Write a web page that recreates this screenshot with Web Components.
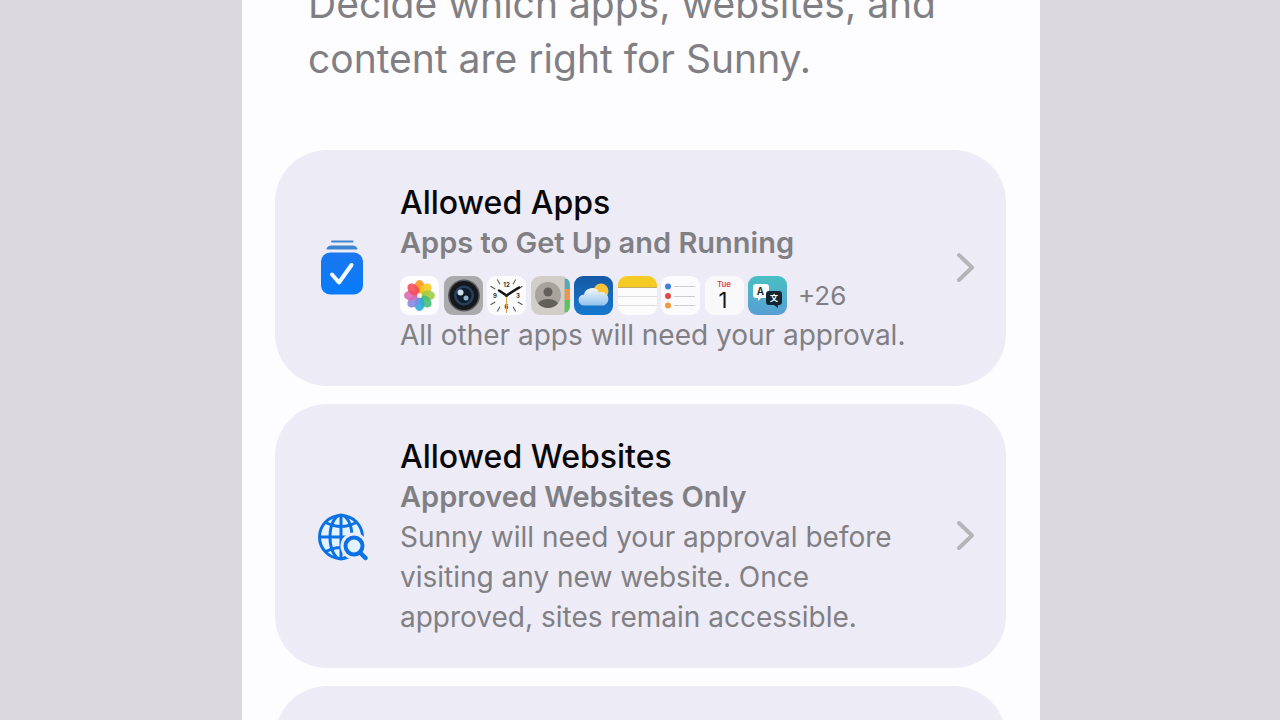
<!DOCTYPE html>
<html lang="en">
<head>
<meta charset="utf-8">
<meta name="viewport" content="width=device-width, initial-scale=1">
<title>Allowed Content</title>
<style>
  html, body { height: 100%; }
  body { margin: 0; overflow: hidden; background: #dbd9df; color: #807f84; font-family: Inter, "Liberation Sans", sans-serif; }
</style>
</head>
<body>
<setup-sheet>
  <span slot="intro">Decide which apps, websites, and content are right for Sunny.</span>
  <option-card>
    <glyph-icon slot="icon" name="apps"></glyph-icon>
    <span slot="title">Allowed Apps</span>
    <span slot="status">Apps to Get Up and Running</span>
    <app-strip slot="extra" more="+26"></app-strip>
    <span slot="detail">All other apps will need your approval.</span>
  </option-card>
  <option-card>
    <glyph-icon slot="icon" name="web"></glyph-icon>
    <span slot="title">Allowed Websites</span>
    <span slot="status">Approved Websites Only</span>
    <span slot="detail">Sunny will need your approval before visiting any new website. Once approved, sites remain accessible.</span>
  </option-card>
  <option-card blank></option-card>
</setup-sheet>

<script>
const define = (name, html, setup) => customElements.define(name, class extends HTMLElement {
  constructor() {
    super();
    this.attachShadow({ mode: "open" }).innerHTML = html;
  }
  connectedCallback() { if (setup) setup(this, this.shadowRoot); }
});

const glyphs = {
  apps: `<svg width="52" height="58" viewBox="0 0 52 58">
    <defs><linearGradient id="g" x1="0" y1="0" x2="0" y2="1"><stop offset="0" stop-color="#1a78ee"/><stop offset="1" stop-color="#087bfb"/></linearGradient></defs>
    <path d="M16 1.500h20.500M11.500 8.500q1.500-2 4-2h21q2.500 0 4 2z" fill="#3c86d0" stroke="#3c86d0" stroke-width="2" stroke-linecap="round" stroke-linejoin="round"/>
    <rect x="5" y="12.500" width="42" height="42" rx="9" fill="url(#g)"/>
    <path d="M16 34.500l7 8L35.500 25" fill="none" stroke="#f4fcff" stroke-width="4" stroke-linecap="round" stroke-linejoin="round"/></svg>`,
  web: `<svg width="52" height="52" viewBox="0 0 52 52" fill="none" stroke="#0c71e4" stroke-width="3">
    <defs><mask id="m"><rect width="52" height="52" fill="#fff" stroke="none"/><circle cx="38" cy="35" r="13.500" fill="#000" stroke="none"/></mask></defs>
    <g mask="url(#m)"><circle cx="25" cy="26" r="21.500" fill="#e2f2ff"/><ellipse cx="25" cy="26" rx="11" ry="22"/><path d="M25 4v44M3 26h44M9 11q16 9 32 0M9 41q16-9 32 0"/></g>
    <circle cx="38" cy="35" r="8.500" fill="#e2f2ff" stroke-width="4"/><path d="M44.500 42l5 5" stroke-width="4.500" stroke-linecap="round"/></svg>`
};

define("glyph-icon", "", (host, root) => {
  root.innerHTML = `<style>:host{display:block}svg{display:block}</style>${glyphs[host.getAttribute("name")]}`;
});

const petals = ["#ff9518", "#f4c91b", "#9bcb42", "#42bd76", "#28a8dc", "#8585df", "#dc68b2", "#f34b56"]
  .map((c, i) => `<ellipse cx="19.500" cy="11" rx="5" ry="7" fill="${c}" opacity=".88" transform="rotate(${i * 45} 19.500 19.500)"/>`).join("");
const ticks = Array.from({ length: 12 }, (_, i) => i % 3
  ? `<path d="M19.500 1v5.500" stroke="#555" transform="rotate(${i * 30} 19.500 19.500)"/>` : "").join("");

const apps = {
  Photos: `<rect width="39" height="39" rx="9" fill="#fdfcfe"/>${petals}<circle cx="19.500" cy="19.500" r="2.500" fill="#fff0df"/>`,
  Camera: `<rect width="39" height="39" rx="9" fill="#aaa9ac"/><circle cx="20" cy="19.500" r="16" fill="#5a595d"/><circle cx="20" cy="19.500" r="14.500" fill="#15181d"/><circle cx="20" cy="19.500" r="10" fill="#28405b"/><circle cx="20" cy="19.500" r="7.500" fill="#101b2c"/><circle cx="16.500" cy="16.500" r="3" fill="#cddfea"/><circle cx="22" cy="22" r="2.500" fill="#8fb2cf"/>`,
  Clock: `<rect width="39" height="39" rx="9" fill="#fcfbfc"/>${ticks}<g font-family="Inter, sans-serif" font-size="6" font-weight="700" fill="#333" text-anchor="middle"><text x="19.500" y="11">12</text><text x="31" y="22">3</text><text x="19.500" y="33">6</text><text x="8" y="22">9</text></g><path d="M12 14.500l7.500 5L32 11.500" fill="none" stroke="#111" stroke-width="2.500" stroke-linecap="round"/><path d="M19.500 19.500V37" stroke="#dda24b"/><circle cx="19.500" cy="19.500" r="1.500" fill="#222"/>`,
  Contacts: `<defs><clipPath id="k"><rect width="39" height="39" rx="9"/></clipPath><clipPath id="p"><circle cx="17" cy="19" r="13"/></clipPath></defs><g clip-path="url(#k)"><rect width="39" height="39" fill="#d1cec7"/><path d="M34 3h5v10h-5z" fill="#51a9bd"/><path d="M34 13h5v11h-5z" fill="#f39345"/><path d="M34 24h5v12h-5z" fill="#55c955"/><path d="M33.500 2v35" stroke="#bbb8b0"/></g><circle cx="17" cy="19" r="13" fill="#a7a39c"/><g clip-path="url(#p)" fill="#625f5b"><circle cx="17" cy="16" r="4.500"/><ellipse cx="17" cy="30" rx="11" ry="7"/></g>`,
  Weather: `<defs><linearGradient id="w" x1="0" y1="0" x2="0" y2="1"><stop offset="0" stop-color="#1659a4"/><stop offset="1" stop-color="#1579cf"/></linearGradient><linearGradient id="c" x1="0" y1="0" x2="0" y2="1"><stop offset="0" stop-color="#f5f8fc"/><stop offset="1" stop-color="#91c2eb"/></linearGradient></defs><rect width="39" height="39" rx="9" fill="url(#w)"/><circle cx="27" cy="15" r="7.500" fill="#f9c43a"/><path d="M10 29.500a5.500 5.500 0 0 1 0-11 8 8 0 0 1 15-2 6.500 6.500 0 0 1 5 13z" fill="url(#c)"/>`,
  Notes: `<defs><clipPath id="n"><rect width="39" height="39" rx="9"/></clipPath></defs><g clip-path="url(#n)"><rect width="39" height="39" fill="#fdfcfd"/><rect width="39" height="11" fill="#f6ca25"/><path d="M0 11.500h39" stroke="#c5aa6a"/><path d="M0 20.500h39M0 29.500h39" stroke="#dedce1"/></g>`,
  Reminders: `<rect width="39" height="39" rx="9" fill="#fbfafc"/><path d="M13 10.500h21M13 20.500h21M13 29.500h21" stroke="#cccbd0"/><circle cx="7" cy="10.500" r="3" fill="#3e7fda"/><circle cx="7" cy="20" r="3" fill="#db4a47"/><circle cx="7" cy="29.500" r="3" fill="#f29b3c"/>`,
  Calendar: `<rect width="39" height="39" rx="9" fill="#f9f8fa"/><g font-family="Inter, sans-serif" text-anchor="middle"><text x="19" y="11" font-size="8" font-weight="500" fill="#df3346">Tue</text><text x="18" y="32" font-size="22" fill="#19191b">1</text></g>`,
  Translate: `<defs><linearGradient id="t" x1="0" y1="0" x2="0" y2="1"><stop offset="0" stop-color="#48bfc2"/><stop offset="1" stop-color="#579fd4"/></linearGradient></defs><rect width="39" height="39" rx="9" fill="url(#t)"/><path d="M8 8h10a3 3 0 0 1 3 3v8a3 3 0 0 1-3 3h-5l-3 3v-3H8a3 3 0 0 1-3-3v-8a3 3 0 0 1 3-3z" fill="#fafcfd"/><path d="M21 15h10a3 3 0 0 1 3 3v8a3 3 0 0 1-3 3h-1v3l-4-3h-5a3 3 0 0 1-3-3v-8a3 3 0 0 1 3-3z" fill="#122631"/><g font-weight="600" text-anchor="middle"><text x="12.500" y="19" font-family="Inter, sans-serif" font-size="10" fill="#142630">A</text><text x="26" y="25" font-family="Noto Sans CJK SC, sans-serif" font-size="8" fill="#fff">文</text></g>`
};

define("app-strip", "", (host, root) => {
  root.innerHTML = `<style>
    :host { display: flex; align-items: center; gap: 11px; padding-top: 13px; font-size: 26px; line-height: 39px; }
    .apps { display: flex; justify-content: space-between; width: 387px; }
    svg { display: block; flex: none; }
  </style><span class="apps">${Object.entries(apps).map(([n, art]) =>
    `<svg role="img" aria-label="${n}" width="39" height="39" viewBox="0 0 39 39">${art}</svg>`).join("")}</span><span>${host.getAttribute("more")}</span>`;
});

define("option-card", `<style>
  :host { display: block; }
  button { display: grid; grid-template-columns: 52px minmax(0, 1fr) 20px; column-gap: 32px; align-items: center;
    box-sizing: border-box; width: 100%; padding: 33px 31px 31px 41px; border: 0; border-radius: 52px;
    background: #edebf5; color: inherit; font: inherit; font-size: 28px; line-height: 40px; text-align: left; }
  :host([blank]) button { min-height: 264px; }
  :host([blank]) svg { visibility: hidden; }
  .text { display: grid; }
  .title { color: #08080a; font-size: 32px; font-weight: 500; }
  .status { font-size: 29px; font-weight: 600; }
  .detail { max-width: 520px; }
</style>
<button type="button">
  <slot name="icon"><span></span></slot>
  <span class="text">
    <slot name="title" class="title"></slot>
    <slot name="status" class="status"></slot>
    <slot name="extra"></slot>
    <span class="detail"><slot name="detail"></slot></span>
  </span>
  <svg width="20" height="34" viewBox="0 0 20 34" fill="none" stroke="#b5b4b9" stroke-width="4" stroke-linecap="round" stroke-linejoin="round" aria-hidden="true"><path d="M4 3l13 12.500L4 28"/></svg>
</button>`);

define("setup-sheet", `<style>
  :host { display: block; box-sizing: border-box; height: 100%; padding: 0 240px 0 242px; overflow: hidden; }
  main { box-sizing: border-box; min-height: 100%; padding: 0 34px 0 33px; background: #fdfcfe; }
  header { display: flex; align-items: flex-end; box-sizing: border-box; height: 150px; padding: 0 33px 64px; overflow: hidden; }
  p { margin: 0; font-size: 39px; line-height: 55px; }
  .cards { display: grid; gap: 18px; }
</style>
<main>
  <header><p><slot name="intro"></slot></p></header>
  <div class="cards"><slot></slot></div>
</main>`);
</script>
</body>
</html>
